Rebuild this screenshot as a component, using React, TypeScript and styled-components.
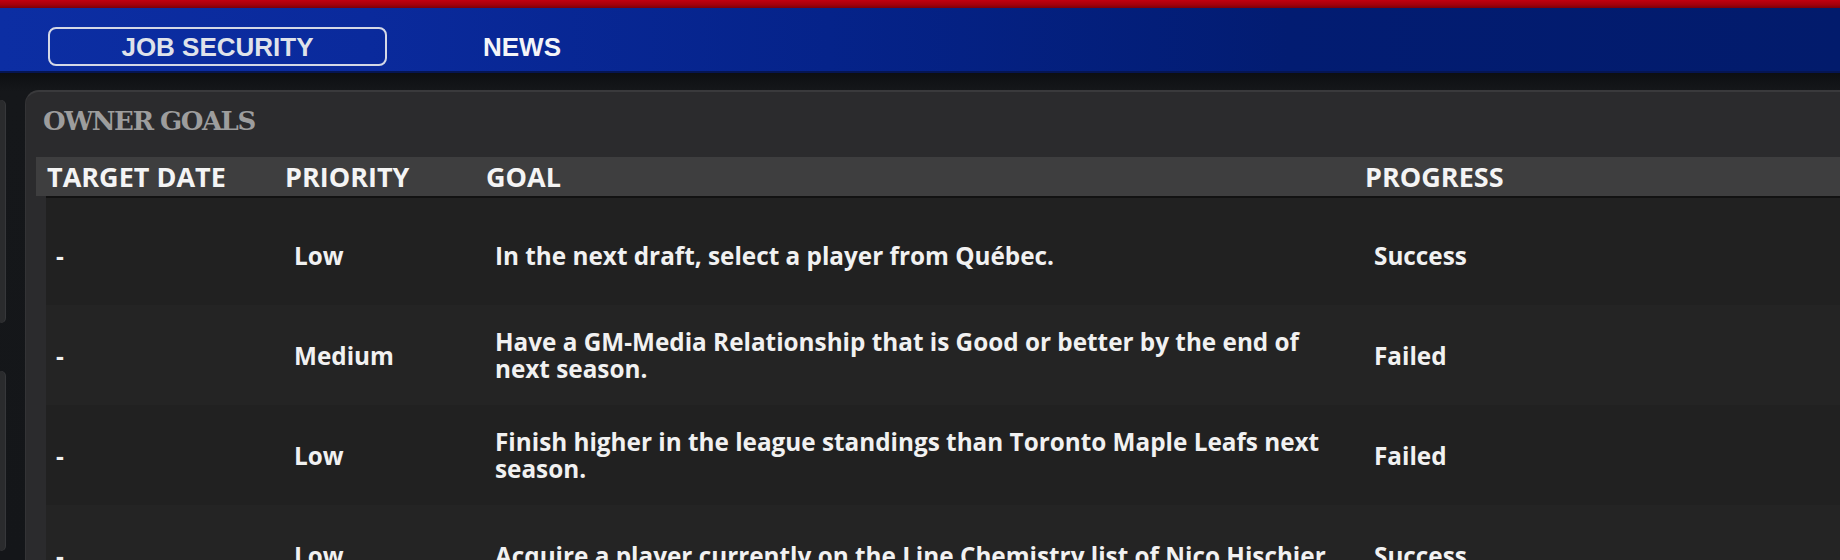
import React from "react";
import styled, { createGlobalStyle } from "styled-components";

const GlobalStyle = createGlobalStyle`
  html, body {
    margin: 0;
    padding: 0;
    background: #131517;
  }
  * { box-sizing: border-box; }
`;

const Page = styled.div`
  width: 1840px;
  height: 560px;
  overflow: hidden;
  display: flex;
  flex-direction: column;
  font-family: "Open Sans", "Noto Sans", sans-serif;
  background: #131517;
`;

const TopStripe = styled.div`
  height: 8px;
  flex: none;
  background: linear-gradient(180deg, #c2000f 0%, #a3000c 60%, #7a0008 100%);
`;

const NavBar = styled.nav`
  height: 65px;
  flex: none;
  display: flex;
  align-items: center;
  gap: 96px;
  padding: 11px 0 0 48px;
  background: linear-gradient(90deg, #0c2ea3 0%, #0a2a9c 20%, #05238a 45%, #021c72 70%, #021b6c 100%);
  box-shadow: inset 0 -2px 0 #051553;
`;

const NavTab = styled.div<{ $active?: boolean }>`
  height: 39px;
  width: ${(p) => (p.$active ? "339px" : "auto")};
  display: flex;
  align-items: center;
  justify-content: center;
  border: ${(p) => (p.$active ? "2px solid #d4d8e6" : "none")};
  border-radius: 8px;
  color: ${(p) => (p.$active ? "#dfe2ea" : "#f4f5f8")};
  font-family: "Liberation Sans", Arial, sans-serif;
  font-size: 26px;
  font-weight: 700;
  line-height: 1;
  padding-top: 1px;
`;

const Content = styled.div`
  flex: 1;
  display: flex;
  gap: 20px;
  padding-top: 17px;
  background: linear-gradient(180deg, #0d0f12 0px, #15171a 18px, #141619 100%);
  min-height: 0;
`;

const Sidebar = styled.div`
  width: 5px;
  flex: none;
  display: flex;
  flex-direction: column;
  gap: 48px;
  padding-top: 10px;
`;

const SideCard = styled.div<{ $h: number }>`
  height: ${(p) => p.$h}px;
  flex: none;
  background: #2a2b2d;
  border-radius: 0 6px 6px 0;
  box-shadow: 1px 0 0 #36373a;
`;

const Panel = styled.section`
  flex: 1;
  margin-right: -20px;
  background: #2b2b2d;
  border-top: 2px solid #3a3a3c;
  border-left: 1px solid #333335;
  border-radius: 14px 0 0 0;
  padding-left: 10px;
  display: flex;
  flex-direction: column;
  min-height: 0;
`;

const Title = styled.h2`
  flex: none;
  margin: 0;
  height: 65px;
  padding: 14px 0 0 7px;
  font-family: "DejaVu Serif", "Liberation Serif", serif;
  font-weight: 700;
  font-size: 26px;
  line-height: 30px;
  letter-spacing: -1.5px;
  color: #9d9d9d;
`;

const columns = "238px 201px 879px 1fr";

const HeaderRow = styled.div`
  flex: none;
  display: grid;
  grid-template-columns: ${columns};
  height: 39px;
  align-items: center;
  background: #3e3e3f;
`;

const HeaderCell = styled.div`
  padding-left: 11px;
  color: #f4f4f4;
  font-size: 27px;
  font-weight: 700;
  line-height: 1;
  white-space: nowrap;
`;

const Body = styled.div`
  flex: none;
  margin-left: 10px;
  border-top: 2px solid #121212;
  padding-top: 7px;
  background: #212121;
`;

const Row = styled.div<{ $alt?: boolean }>`
  display: grid;
  grid-template-columns: ${columns};
  height: 100px;
  align-items: center;
  background: ${(p) => (p.$alt ? "#242424" : "#212121")};
`;

const Cell = styled.div<{ $wrap?: boolean }>`
  padding-left: 10px;
  padding-right: ${(p) => (p.$wrap ? "19px" : "0")};
  color: #f1f1f1;
  font-size: 24.3px;
  font-weight: 700;
  line-height: 27px;
  white-space: ${(p) => (p.$wrap ? "normal" : "nowrap")};
`;

const goals = [
  { date: "-", priority: "Low", goal: "In the next draft, select a player from Québec.", progress: "Success" },
  {
    date: "-",
    priority: "Medium",
    goal: "Have a GM-Media Relationship that is Good or better by the end of next season.",
    progress: "Failed",
  },
  {
    date: "-",
    priority: "Low",
    goal: "Finish higher in the league standings than Toronto Maple Leafs next season.",
    progress: "Failed",
  },
  {
    date: "-",
    priority: "Low",
    goal: "Acquire a player currently on the Line Chemistry list of Nico Hischier.",
    progress: "Success",
  },
];

export default function App() {
  return (
    <Page>
      <GlobalStyle />
      <TopStripe />
      <NavBar>
        <NavTab $active>JOB SECURITY</NavTab>
        <NavTab>NEWS</NavTab>
      </NavBar>
      <Content>
        <Sidebar>
          <SideCard $h={223} />
          <SideCard $h={180} />
        </Sidebar>
        <Panel>
          <Title>OWNER GOALS</Title>
          <HeaderRow>
            <HeaderCell>TARGET DATE</HeaderCell>
            <HeaderCell>PRIORITY</HeaderCell>
            <HeaderCell>GOAL</HeaderCell>
            <HeaderCell>PROGRESS</HeaderCell>
          </HeaderRow>
          <Body>
            {goals.map((g, i) => (
              <Row key={i} $alt={i % 2 === 1}>
                <Cell>{g.date}</Cell>
                <Cell>{g.priority}</Cell>
                <Cell $wrap>{g.goal}</Cell>
                <Cell>{g.progress}</Cell>
              </Row>
            ))}
          </Body>
        </Panel>
      </Content>
    </Page>
  );
}
